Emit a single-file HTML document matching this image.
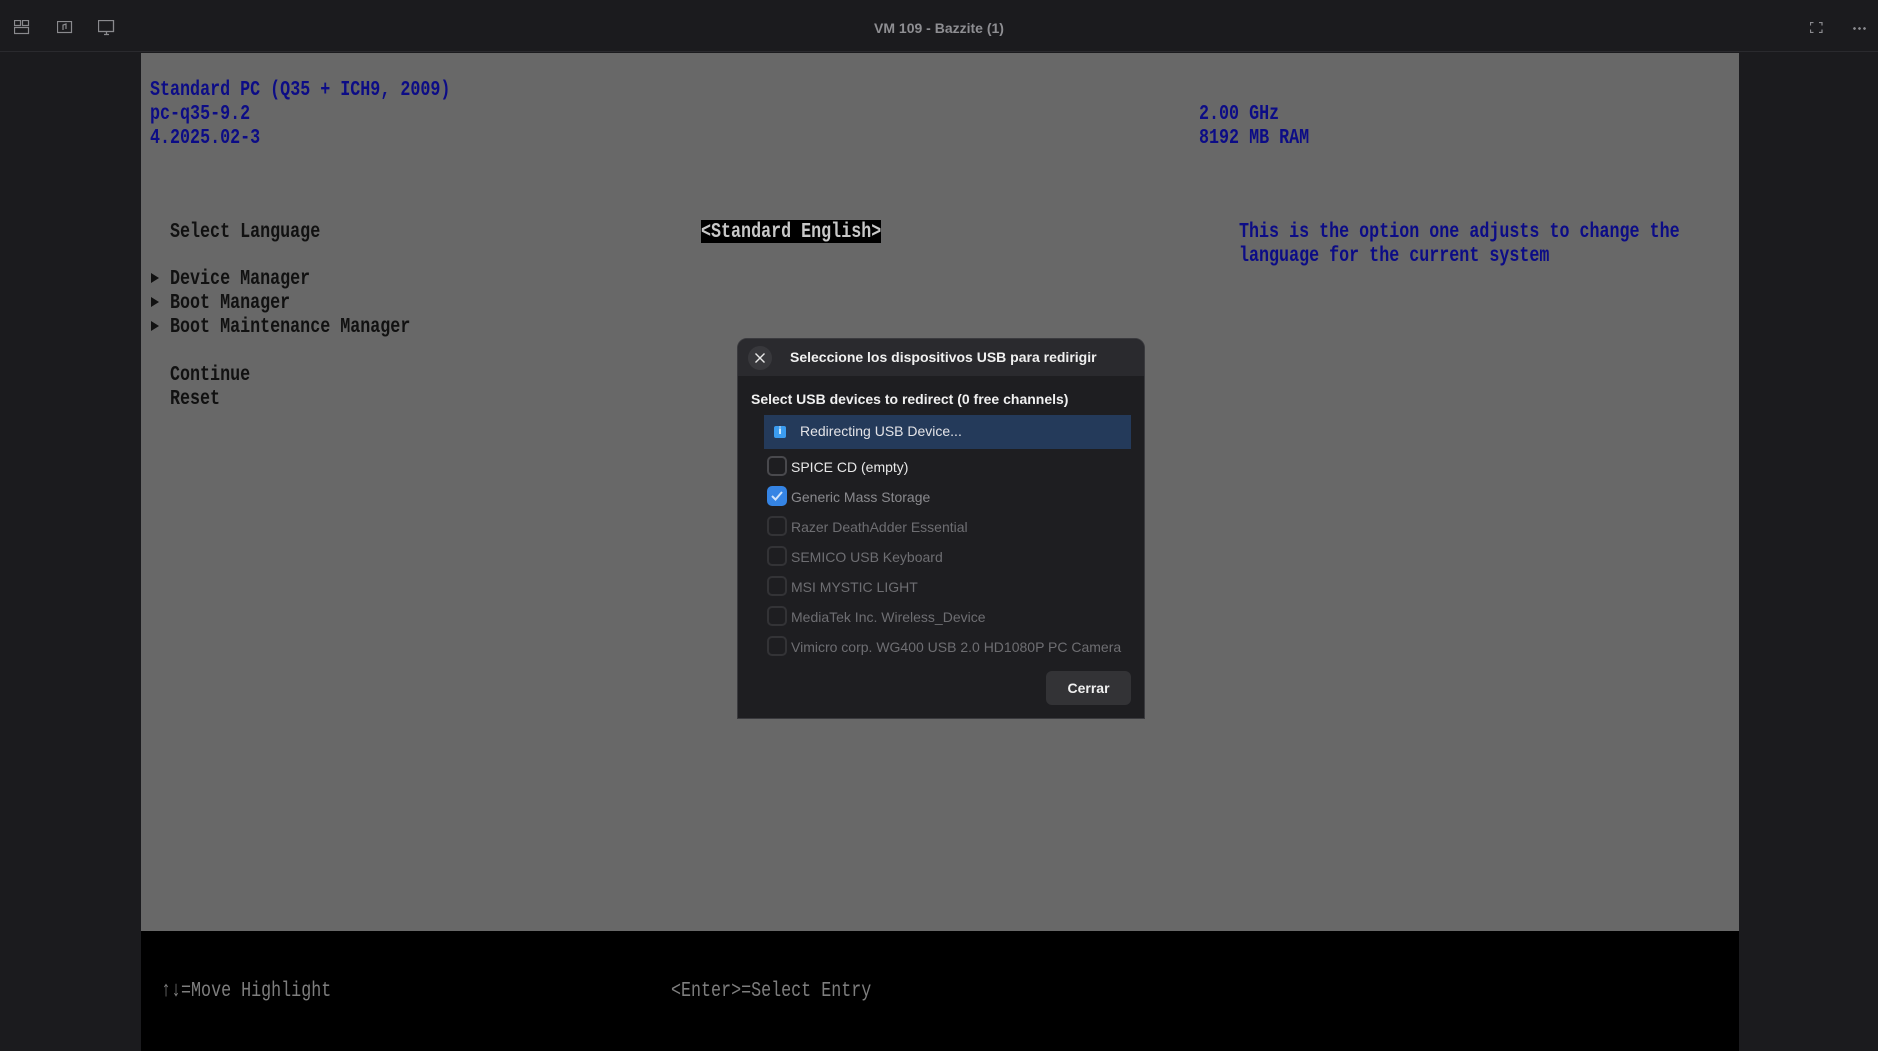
<!DOCTYPE html>
<html><head><meta charset="utf-8"><style>
*{margin:0;padding:0;box-sizing:border-box}
body{width:1878px;height:1051px;background:#1b1b1e;position:relative;overflow:hidden;font-family:"Liberation Sans",sans-serif}
.top{position:absolute;left:0;top:0;width:1878px;height:52px;background:#1b1b1e;border-bottom:1px solid #2a2a2e}
.title{position:absolute;left:0;width:1878px;top:20px;text-align:center;color:#8e8e92;font-size:14px;font-weight:bold}
.vm{position:absolute;left:141px;top:53px;width:1598px;height:878px;background:#686868}
.blk{position:absolute;left:141px;top:931px;width:1598px;height:120px;background:#000}
.m{position:absolute;font-family:"Liberation Mono",monospace;font-size:16.7px;font-weight:bold;line-height:24px;transform:scaleY(1.3);transform-origin:left center;white-space:pre;height:24px}
.b{color:#0c0c86}.k{color:#111}.g{color:#7e7e7e;font-weight:normal}
.tri{position:absolute;width:0;height:0;border-left:8px solid #111;border-top:5px solid transparent;border-bottom:5px solid transparent}
.dlg{position:absolute;left:737px;top:338px;width:408px;height:381px;background:#1e1e21;border-radius:10px 10px 0 0;overflow:hidden;border:1px solid #3a3a3e}
.dh{height:37px;background:#2a2a2e}
.row{position:absolute;left:29px;height:22px;font-size:14px;color:#6e6e72;line-height:22px}
.row i{position:absolute;left:0;top:0;width:20px;height:20px;border:2px solid #333336;border-radius:5px}
.row span{position:absolute;left:24px;white-space:nowrap}
</style></head><body>
<div class="top">
<svg style="position:absolute;left:14px;top:20px" width="16" height="15" fill="none" stroke="#8a8a8e" stroke-width="1.2"><rect x="0.5" y="0.5" width="6" height="5"/><rect x="8.5" y="0.5" width="6" height="5"/><rect x="0.5" y="7.5" width="14" height="6"/></svg>
<svg style="position:absolute;left:57px;top:21px" width="16" height="13" fill="none" stroke="#8a8a8e" stroke-width="1.2"><rect x="0.5" y="0.5" width="14" height="11"/><path d="M6 9V4l3-1v5"/></svg>
<svg style="position:absolute;left:98px;top:20px" width="17" height="16" fill="none" stroke="#8a8a8e" stroke-width="1.3"><rect x="0.5" y="0.5" width="15" height="11"/><path d="M6 14.5h5M8.5 12v2"/></svg>
<div class="title">VM 109 - Bazzite (1)</div>
<svg style="position:absolute;left:1810px;top:22px" width="13" height="11" fill="none" stroke="#8a8a8e" stroke-width="1.2"><path d="M0.5 3.5V0.5h3M9 0.5h3v3M12 7.5v3H9M3.5 10.5h-3v-3"/></svg>
<div style="position:absolute;left:1852px;top:27px;width:14px;height:3px;background:radial-gradient(circle,#8a8a8e 1.2px,transparent 1.5px) 0 0/5px 3px"></div>
</div>
<div class="vm"></div>
<div class="blk"></div>
<div class="m b" style="left:150px;top:79px">Standard PC (Q35 + ICH9, 2009)</div>
<div class="m b" style="left:150px;top:103px">pc-q35-9.2</div>
<div class="m b" style="left:150px;top:127px">4.2025.02-3</div>
<div class="m b" style="left:1199px;top:103px">2.00 GHz</div>
<div class="m b" style="left:1199px;top:127px">8192 MB RAM</div>
<div class="m k" style="left:170px;top:221px">Select Language</div>
<div style="position:absolute;left:701px;top:220px;width:180px;height:23px;background:#000"></div>
<div class="m" style="left:701px;top:221px;color:#c8c8c8">&lt;Standard English&gt;</div>
<div class="m b" style="left:1239px;top:221px">This is the option one adjusts to change the</div>
<div class="m b" style="left:1239px;top:245px">language for the current system</div>
<div class="tri" style="left:151px;top:273px"></div>
<div class="tri" style="left:151px;top:297px"></div>
<div class="tri" style="left:151px;top:321px"></div>
<div class="m k" style="left:170px;top:268px">Device Manager</div>
<div class="m k" style="left:170px;top:292px">Boot Manager</div>
<div class="m k" style="left:170px;top:316px">Boot Maintenance Manager</div>
<div class="m k" style="left:170px;top:364px">Continue</div>
<div class="m k" style="left:170px;top:388px">Reset</div>
<div class="m g" style="left:161px;top:980px">↑↓=Move Highlight</div>
<div class="m g" style="left:671px;top:980px">&lt;Enter&gt;=Select Entry</div>

<div class="dlg">
<div class="dh"></div>
<div style="position:absolute;left:10px;top:7px;width:24px;height:24px;border-radius:12px;background:#38383c"></div>
<svg style="position:absolute;left:17px;top:14px" width="10" height="10" stroke="#e8e8e8" stroke-width="1.4"><path d="M0.5 0.5l9 9M9.5 0.5l-9 9"/></svg>
<div style="position:absolute;left:52px;top:10px;color:#f0f0f0;font-size:14px;font-weight:bold">Seleccione los dispositivos USB para redirigir</div>
<div style="position:absolute;left:13px;top:52px;color:#f0f0f0;font-size:14px;font-weight:bold">Select USB devices to redirect (0 free channels)</div>
<div style="position:absolute;left:26px;top:76px;width:367px;height:34px;background:#243a5a"></div>
<div style="position:absolute;left:36px;top:87px;width:12px;height:12px;background:#3b9cf0;border-radius:2px;color:#fff;font-size:10px;line-height:12px;text-align:center;font-weight:bold">i</div>
<div style="position:absolute;left:62px;top:84px;color:#e4e4e8;font-size:14px">Redirecting USB Device...</div>
<div class="row" style="top:117px;color:#e8e8e8"><i style="border-color:#49494d"></i><span>SPICE CD (empty)</span></div>
<div class="row" style="top:147px;color:#8a8a8e"><i style="background:#3584e4;border-color:#3584e4"></i><svg style="position:absolute;left:4px;top:5px" width="12" height="10" fill="none" stroke="#cfe3fb" stroke-width="2"><path d="M1 5l3.5 3.5L11 1"/></svg><span>Generic Mass Storage</span></div>
<div class="row" style="top:177px"><i></i><span>Razer DeathAdder Essential</span></div>
<div class="row" style="top:207px"><i></i><span>SEMICO USB Keyboard</span></div>
<div class="row" style="top:237px"><i></i><span>MSI MYSTIC LIGHT</span></div>
<div class="row" style="top:267px"><i></i><span>MediaTek Inc. Wireless_Device</span></div>
<div class="row" style="top:297px"><i></i><span>Vimicro corp. WG400 USB 2.0 HD1080P PC Camera</span></div>
<div style="position:absolute;left:308px;top:332px;width:85px;height:34px;background:#333336;border-radius:6px;color:#f0f0f0;font-size:14px;font-weight:bold;text-align:center;line-height:34px">Cerrar</div>
</div>
</body></html>
